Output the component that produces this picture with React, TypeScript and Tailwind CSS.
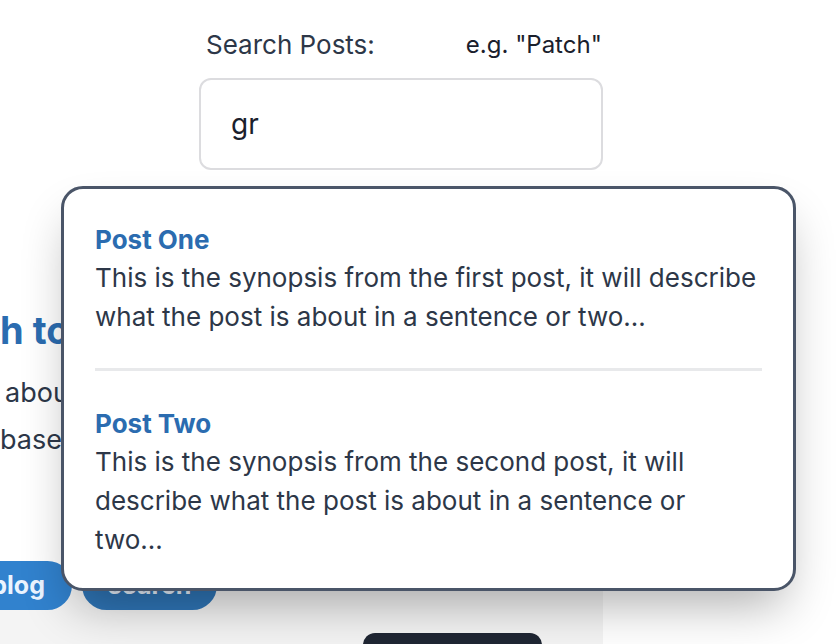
import React from "react";

export default function App() {
  return (
    <div
      className="relative w-[838px] h-[644px] overflow-hidden bg-white text-[#2d3748]"
      style={{ fontFamily: "Inter, 'Noto Sans', sans-serif" }}
    >
      {/* Underlying page column */}
      <div className="w-[603px] flex flex-col">
        {/* Search form */}
        <div className="pt-[27px] pl-[199px]">
          <div className="flex items-center h-[36px]">
            <span className="pl-[7px] text-[26px] leading-[36px] text-[#2d3748] whitespace-nowrap">Search Posts:</span>
            <span className="ml-[91px] text-[24px] leading-[36px] text-[#1a202c] whitespace-nowrap">
              e.g. "Patch"
            </span>
          </div>
          <div className="mt-[15px] h-[92px] w-[404px] rounded-[12px] border-2 border-[#dcdcdf] flex items-center pl-[30px]">
            <span className="text-[28px] text-[#1a202c] leading-none">gr</span>
          </div>
        </div>

        {/* Hero text behind dropdown */}
        <div className="mt-[138px] whitespace-nowrap">
          <div className="text-[38px] leading-[45px] font-bold text-[#2b6cb0]">h to our blog</div>
          <div className="mt-[16px] text-[27px] leading-[47px] text-[#2d3748]">
            <div className="pl-[5px]">about the things we build</div>
            <div>based on what we learn</div>
          </div>
        </div>

        {/* Buttons row */}
        <div className="relative z-10 mt-[98px] flex gap-[10px] -ml-[40px]">
          <div className="w-[112px] h-[49px] rounded-full bg-[#3182ce] flex items-center justify-end pr-[27px] text-[25px] font-bold text-[#ebf4ff]">
            blog
          </div>
          <div className="w-[135px] h-[49px] rounded-full bg-[#2f76b8] flex items-center justify-center text-[25px] font-bold text-[#ebf4ff]">
            search
          </div>
        </div>

        {/* Bottom section */}
        <div className="-mt-[20px] h-[120px] bg-[#f4f4f4] pt-[43px] pl-[363px]">
          <div className="w-[179px] h-[50px] rounded-[12px] bg-[#1f2633]" />
        </div>
      </div>

      {/* Autocomplete dropdown */}
      <div className="absolute z-20 left-[61px] top-[186px] w-[735px] h-[405px] rounded-[22px] border-[3px] border-[#4a5568] bg-white shadow-[0_25px_50px_-12px_rgba(0,0,0,0.32)] px-[31px]">
        <div className="pt-[33px] pb-[32px]">
          <div className="text-[26px] leading-[36px] font-bold text-[#2b6cb0]">Post One</div>
          <div className="text-[26px] leading-[39px] text-[#2d3748] whitespace-nowrap">
            <div>This is the synopsis from the first post, it will describe</div>
            <div>what the post is about in a sentence or two...</div>
          </div>
        </div>
        <div className="h-[3px] bg-[#e8e9eb]" />
        <div className="pt-[35px]">
          <div className="text-[26px] leading-[36px] font-bold text-[#2b6cb0]">Post Two</div>
          <div className="text-[26px] leading-[39px] text-[#2d3748] whitespace-nowrap">
            <div>This is the synopsis from the second post, it will</div>
            <div>describe what the post is about in a sentence or</div>
            <div>two...</div>
          </div>
        </div>
      </div>
    </div>
  );
}
